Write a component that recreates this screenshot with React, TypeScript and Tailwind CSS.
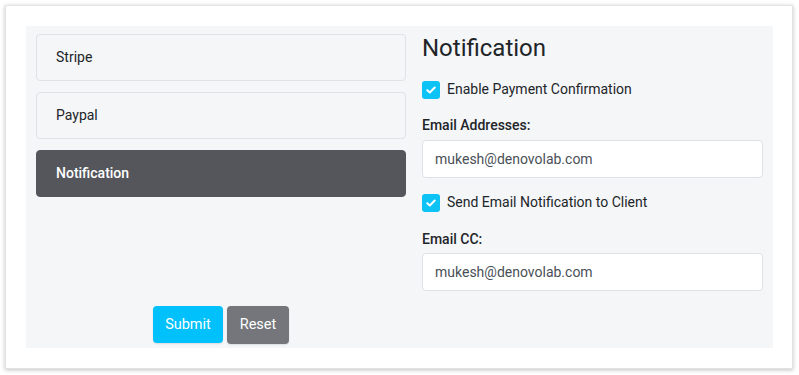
import React from "react";

function Check() {
  return (
    <span className="flex h-[18px] w-[18px] shrink-0 items-center justify-center rounded-[3px] bg-[#0dc2f5]">
      <svg width="10" height="8" viewBox="0 0 10 8" fill="none">
        <path d="M1.3 4.2 L3.8 6.5 L8.7 1.5" stroke="white" strokeWidth="2" strokeLinecap="round" strokeLinejoin="round" />
      </svg>
    </span>
  );
}

export default function App() {
  const font = { fontFamily: "Roboto, 'Liberation Sans', sans-serif" };
  return (
    <div className="h-[375px] w-[799px] bg-white p-[5px]" style={font}>
      <div className="h-[364px] w-[788px] border border-[#e3e3e3] bg-white pl-[20px] pr-[19px] pt-[20px] shadow-[0_1px_4px_rgba(0,0,0,0.25)]">
        <div className="flex h-[322px] gap-[16px] bg-[#f5f6f8] px-[10px] pt-[8px]">
          <div className="flex w-[370px] flex-col">
            <div className="flex flex-col gap-[11px]">
              <div className="flex h-[47px] items-center rounded-[4px] border border-[#dfe2e6] bg-[#f5f6f8] pl-[19px] text-[14px] text-[#212529]">
                Stripe
              </div>
              <div className="flex h-[47px] items-center rounded-[4px] border border-[#dfe2e6] bg-[#f5f6f8] pl-[19px] text-[14px] text-[#212529]">
                Paypal
              </div>
              <div className="flex h-[47px] items-center rounded-[4px] border border-[#54565b] bg-[#54565b] pl-[19px] text-[14px] font-medium text-white">
                Notification
              </div>
            </div>
            <div className="mt-auto mb-[4px] flex justify-center gap-[4px]">
              <button className="h-[37px] w-[70px] rounded-[4px] bg-[#00c1fb] text-[14.5px] text-white shadow-[0_1px_2px_rgba(0,0,0,0.1)]">
                Submit
              </button>
              <button className="h-[38px] w-[62px] rounded-[4px] bg-[#74767b] text-[14.5px] text-white shadow-[0_1px_2px_rgba(0,0,0,0.1)]">
                Reset
              </button>
            </div>
          </div>
          <div className="flex w-[341px] flex-col">
            <h1 className="text-[24px] leading-[29px] text-[#212529]">Notification</h1>
            <label className="mt-[16px] flex items-center gap-[7px] text-[14px] text-[#212529]">
              <Check />
              Enable Payment Confirmation
            </label>
            <div className="mt-[15px] text-[14px] font-medium leading-[21px] text-[#212529]">Email Addresses:</div>
            <div className="mt-[4px] flex h-[38px] items-center rounded-[4px] border border-[#dee2e6] bg-white px-[12px] text-[14px] text-[#495057]">
              mukesh@denovolab.com
            </div>
            <label className="mt-[14px] flex items-center gap-[7px] text-[14px] text-[#212529]">
              <Check />
              Send Email Notification to Client
            </label>
            <div className="mt-[16px] text-[14px] font-medium leading-[21px] text-[#212529]">Email CC:</div>
            <div className="mt-[3px] flex h-[38px] items-center rounded-[4px] border border-[#dee2e6] bg-white px-[12px] text-[14px] text-[#495057]">
              mukesh@denovolab.com
            </div>
          </div>
        </div>
      </div>
    </div>
  );
}
